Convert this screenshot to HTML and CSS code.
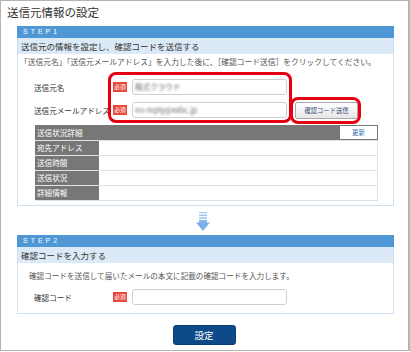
FILE: index.html
```html
<!DOCTYPE html>
<html lang="ja">
<head>
<meta charset="utf-8">
<title>送信元情報の設定</title>
<link rel="stylesheet" href="styles.css">
</head>
<body>
<div class="frame">
  <h1 class="title">送信元情報の設定</h1>

  <section class="step step1">
    <div class="step-bar">STEP1</div>
    <div class="step-head">送信元の情報を設定し、確認コードを送信する</div>
    <p class="desc desc1">「送信元名」「送信元メールアドレス」を入力した後に、［確認コード送信］をクリックしてください。</p>
    <div class="form form1">
      <div class="row">
        <span class="label">送信元名</span>
        <span class="req">必須</span>
        <span class="input"><span class="blur">株式クラウド</span></span>
      </div>
      <div class="row">
        <span class="label">送信元メールアドレス</span>
        <span class="req">必須</span>
        <span class="input"><span class="blur">no-reply@xxbc.jp</span></span>
        <button class="send-btn">確認コード送信</button>
      </div>
    </div>
    <div class="status">
      <div class="status-head"><span class="status-title">送信状況詳細</span><button class="refresh">更新</button></div>
      <div class="status-row"><span class="status-label">宛先アドレス</span><span class="status-val"></span></div>
      <div class="status-row"><span class="status-label">送信時間</span><span class="status-val"></span></div>
      <div class="status-row"><span class="status-label">送信状況</span><span class="status-val"></span></div>
      <div class="status-row last"><span class="status-label">詳細情報</span><span class="status-val"></span></div>
    </div>
    <div class="highlight hl-fields"></div>
    <div class="highlight hl-button"></div>
  </section>

  <div class="arrow">
    <svg width="14" height="19" viewBox="0 0 14 19">
      <rect x="3" y="0" width="8" height="1.4" fill="#a9cdf3"/>
      <rect x="3" y="2.7" width="8" height="1.4" fill="#9cc4f0"/>
      <rect x="3" y="5.4" width="8" height="1.4" fill="#8fbcee"/>
      <rect x="3" y="8" width="8" height="3" fill="#84b5ec"/>
      <polygon points="0,10.5 14,10.5 7,19" fill="#7daeea"/>
    </svg>
  </div>

  <section class="step step2">
    <div class="step-bar">STEP2</div>
    <div class="step-head">確認コードを入力する</div>
    <p class="desc desc2">確認コードを送信して届いたメールの本文に記載の確認コードを入力します。</p>
    <div class="form form2">
      <div class="row">
        <span class="label">確認コード</span>
        <span class="req">必須</span>
        <span class="input"></span>
      </div>
    </div>
  </section>

  <div class="actions"><button class="submit">設定</button></div>
</div>
</body>
</html>
```
FILE: styles.css
```css
* { box-sizing: border-box; }
html, body { margin: 0; padding: 0; background: #fff; }
body {
  width: 410px;
  height: 352px;
  font-family: "Noto Sans CJK JP", "Noto Sans", sans-serif;
  color: #333;
}
.frame {
  width: 410px;
  height: 351px;
  border: 1px solid #b4b4b4;
  border-right-width: 2px;
}
.title {
  margin: 0 0 6px;
  padding: 3px 0 0 6px;
  font-size: 11.5px;
  line-height: 16px;
  font-weight: normal;
  color: #333;
}
.step {
  position: relative;
  width: 377px;
  margin-left: 16px;
  border: 1px solid #cde0f2;
}
.step1 { padding-bottom: 4px; }
.step2 { padding-bottom: 8px; }
.step-bar {
  margin: -1px -1px 0;
  height: 12px;
  padding-left: 6px;
  background: #4f97d5;
  color: #fff;
  font-family: "Liberation Sans", "Noto Sans", sans-serif;
  font-size: 7px;
  line-height: 12px;
  letter-spacing: 3px;
}
.step-head {
  height: 16px;
  padding-left: 3px;
  background: #dce9f6;
  font-size: 8.5px;
  line-height: 16px;
  color: #333;
}
.desc {
  margin: 0;
  font-size: 7.6px;
  line-height: 12px;
  color: #555;
  white-space: nowrap;
}
.desc1 { padding: 2px 0 0 2px; font-size: 7.75px; }
.desc2 { padding: 7px 0 0 11px; }
.form {
  padding-left: 16px;
  display: flex;
  flex-direction: column;
  gap: 7px;
}
.form1 { margin-top: 11px; }
.form2 { margin-top: 7px; }
.row {
  display: flex;
  align-items: center;
  height: 16px;
}
.label {
  width: 79px;
  font-size: 7.6px;
  color: #333;
  white-space: nowrap;
}
.req {
  width: 14px;
  height: 10px;
  margin-right: 5px;
  background: #e8473c;
  color: #fff;
  font-size: 5.8px;
  line-height: 10px;
  text-align: center;
}
.input {
  width: 155px;
  height: 16px;
  border: 1px solid #cfcfcf;
  border-radius: 3px;
  background: #fff;
  padding-left: 2px;
  font-size: 7.6px;
  line-height: 14px;
  color: #888;
}
.blur {
  display: inline-block;
  filter: blur(1px);
  color: #666;
}
.send-btn {
  margin-left: 8px;
  width: 63px;
  height: 17px;
  padding: 0;
  border: 1px solid #a9a9a9;
  border-radius: 2px;
  background: linear-gradient(#ffffff, #e6e6e6);
  color: #3d5278;
  font-family: "Noto Sans CJK JP", sans-serif;
  font-size: 6.3px;
  line-height: 15px;
}
.status {
  margin: 7px 15px 0 17px;
  width: 343px;
}
.status-head {
  height: 15px;
  background: #777;
  display: flex;
  align-items: center;
  justify-content: space-between;
}
.status-title {
  padding-left: 2px;
  color: #fff;
  font-size: 7.6px;
}
.refresh {
  width: 37px;
  height: 13px;
  margin-right: 1px;
  padding: 0;
  border: none;
  background: #fff;
  color: #3a6db5;
  font-family: "Noto Sans CJK JP", sans-serif;
  font-size: 6.5px;
  line-height: 13px;
}
.status-row {
  display: grid;
  grid-template-columns: 64px 1fr;
  height: 15px;
  border-top: 1px solid #e2e2e2;
}
.status-row.last {
  height: 16px;
  border-bottom: 1px solid #e2e2e2;
}
.status-label {
  background: #777;
  color: #fff;
  font-size: 7.6px;
  line-height: 14px;
  padding-left: 2px;
}
.status-val {
  border-right: 1px solid #e2e2e2;
}
.highlight {
  position: absolute;
  border: 3px solid #e60012;
  border-radius: 8px;
  pointer-events: none;
}
.hl-fields {
  left: 90px;
  top: 45px;
  width: 184px;
  height: 51px;
}
.hl-button {
  left: 272px;
  top: 70px;
  width: 71px;
  height: 27px;
}
.arrow {
  display: flex;
  justify-content: center;
  margin: 6px 0 4px;
  height: 19px;
}
.arrow svg { display: block; margin-left: -3px; }
.actions {
  display: flex;
  justify-content: center;
  margin-top: 11px;
  padding-right: 1px;
}
.submit {
  width: 63px;
  height: 20px;
  padding: 0;
  border: 1px solid #0a3d73;
  border-radius: 3px;
  background: #0e4a87;
  color: #fff;
  font-family: "Noto Sans CJK JP", sans-serif;
  font-size: 9.5px;
  line-height: 18px;
}
```
